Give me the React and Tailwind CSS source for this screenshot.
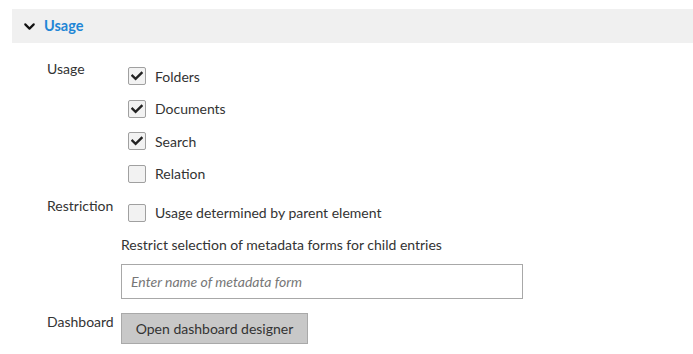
import { ChevronDown } from 'lucide-react'

function Check({ checked, label }) {
  return (
    <div className="flex items-center h-[18px]">
      <span className="w-[18px] h-[18px] shrink-0 rounded-[2px] border border-[#a0a0a0] bg-[#f2f2f2] flex items-center justify-center">
        {checked && (
          <svg width="12" height="10" viewBox="0 0 12 10" fill="none">
            <path d="M1.5 4.8 L4.6 7.8 L10.5 2" stroke="#222" strokeWidth="2.4" strokeLinecap="square" />
          </svg>
        )}
      </span>
      <span className="ml-[9px] text-[14px] text-[#333]">{label}</span>
    </div>
  )
}

export default function App() {
  return (
    <div className="w-[693px] h-[354px] bg-white pt-[9px] pl-[12px] font-['Lato','Liberation_Sans',sans-serif] text-[#333]">
      {/* Section header */}
      <div className="h-[34px] bg-[#f0f0f0] flex items-center pl-[9px]">
        <ChevronDown size={17} strokeWidth={3} className="text-[#111]" />
        <span className="ml-[6px] text-[14.5px] font-bold text-[#1f86d6]">Usage</span>
      </div>

      <div className="pl-[35px] pt-[17px]">
        {/* Usage */}
        <div className="flex">
          <div className="w-[81px] text-[14px] leading-[18px]">Usage</div>
          <div className="flex flex-col gap-[14.5px] pt-[7px]">
            <Check checked label="Folders" />
            <Check checked label="Documents" />
            <Check checked label="Search" />
            <Check label="Relation" />
          </div>
        </div>

        {/* Restriction */}
        <div className="flex mt-[14px]">
          <div className="w-[74px] text-[14px] leading-[18px]">Restriction</div>
          <div className="flex flex-col pt-[7px]">
            <div className="pl-[7px]">
              <Check label="Usage determined by parent element" />
            </div>
            <div className="mt-[14px] text-[14px] leading-[18px]">Restrict selection of metadata forms for child entries</div>
            <div className="mt-[10px] w-[402px] h-[35px] border border-[#a8a8a8] flex items-center px-[9px]">
              <span className="text-[14px] italic text-[#777]">Enter name of metadata form</span>
            </div>
          </div>
        </div>

        {/* Dashboard */}
        <div className="flex mt-[14px]">
          <div className="w-[74px] text-[14px] leading-[18px]">Dashboard</div>
          <button className="w-[187px] h-[31px] bg-[#c8c8c8] border border-[#a9a9a9] text-[14px] text-[#333]">
            Open dashboard designer
          </button>
        </div>
      </div>
    </div>
  )
}
